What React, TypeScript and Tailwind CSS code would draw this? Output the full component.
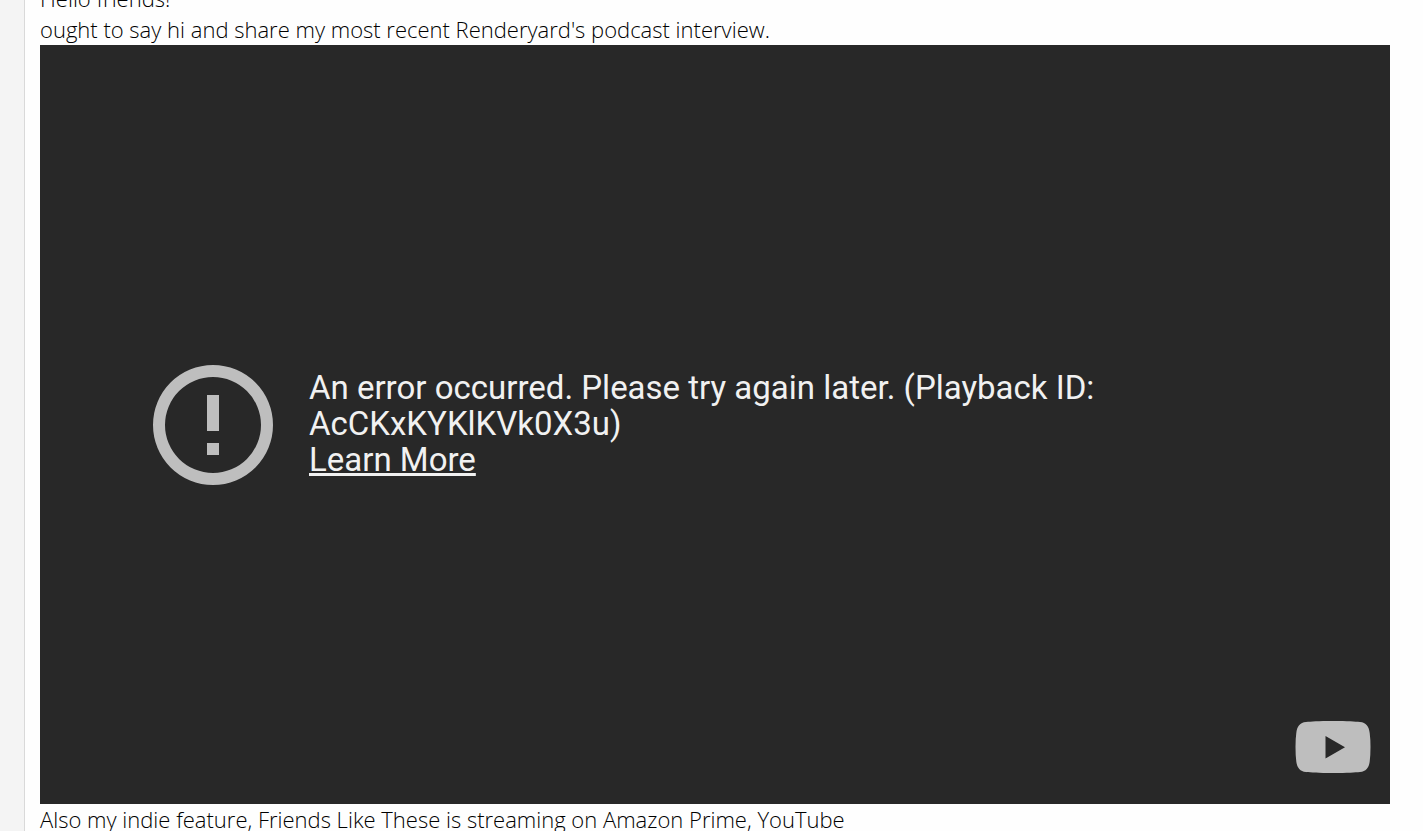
function ErrorIcon() {
  return (
    <svg viewBox="2 2 20 20" className="size-[120px] shrink-0 fill-[#bebebe]" aria-hidden="true">
      <path d="M11 15h2v2h-2zm0-8h2v6h-2zm1-5a10 10 0 1 0 0 20 10 10 0 0 0 0-20zm0 18a8 8 0 1 1 0-16 8 8 0 0 1 0 16z" />
    </svg>
  )
}

function YouTubeLogo() {
  return (
    <svg viewBox="0 0 76 53" className="h-[53px] w-[76px] fill-[#bebebe]" aria-hidden="true">
      <path
        fillRule="evenodd"
        d="M38 0C53 0 60 .5 65 1C71 1.500 74 5.500 74.700 12Q75.500 18 75.500 26T74.700 40.500C74 46.500 71 50.500 65 51C60 51.500 53 52 38 52S16 51.500 11 51C5 50.500 2 46.500 1.300 40.500Q.5 34.500 .5 26T1.300 12C2 5.500 5 1.500 11 1C16 .5 23 0 38 0ZM30.500 15V37.500L50 26.200Z"
      />
    </svg>
  )
}

function VideoEmbed() {
  return (
    <div className="flex aspect-video flex-col bg-[#282828] font-normal text-[#f1f1f1]">
      <div className="h-[120px] shrink-0" />
      <div className="flex flex-1 items-center gap-9 px-[113px]">
        <ErrorIcon />
        <div className="max-w-[800px] pb-0.5 font-['Roboto',sans-serif] text-[33px] leading-9">
          <p>An error occurred. Please try again later. (Playback ID: AcCKxKYKlKVk0X3u)</p>
          <a href="#" className="underline">Learn More</a>
        </div>
      </div>
      <div className="flex h-[120px] shrink-0 items-end justify-end px-[19px] pb-[30px]">
        <a href="#" aria-label="Watch on YouTube">
          <YouTubeLogo />
        </a>
      </div>
    </div>
  )
}

export default function App() {
  return (
    <div className="flex h-screen overflow-hidden bg-[#f4f4f4]">
      <main className="ml-6 flex-1 border-l border-[#d9d9d9] bg-[#fefefe] pr-[33px] pl-[15px] font-['Open_Sans','Noto_Sans',sans-serif] text-[22px] leading-[31px] font-light text-black">
        <div className="-mt-[17px]">
          <p>Hello friends!</p>
          <p>ought to say hi and share my most recent Renderyard's podcast interview.</p>
        </div>
        <VideoEmbed />
        <p>Also my indie feature, Friends Like These is streaming on Amazon Prime, YouTube</p>
      </main>
    </div>
  )
}
